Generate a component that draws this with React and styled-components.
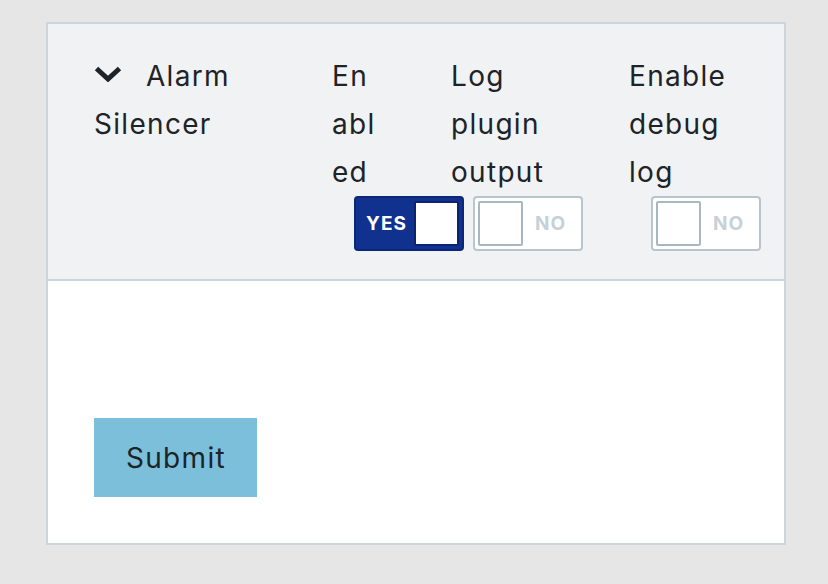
import React from 'react';
import styled, { createGlobalStyle } from 'styled-components';

const GlobalStyle = createGlobalStyle`
  body {
    margin: 0;
    background: #e6e6e6;
    font-family: Inter, "Noto Sans", sans-serif;
    color: #1d2327;
  }
`;

const Page = styled.div`
  padding: 22px 42px 0 46px;
`;

const Card = styled.form`
  border: 2px solid #c9d6df;
  background: #fff;
`;

const Header = styled.div`
  display: grid;
  grid-template-columns: 238px 119px 178px 1fr;
  align-items: start;
  padding: 28px 24px 28px 46px;
  background: #f0f2f4;
  border-bottom: 2px solid #c9d6df;
  font-size: 28px;
  line-height: 48px;
  letter-spacing: 1.3px;
`;

const Title = styled.div`
  width: 200px;
`;

const Chevron = styled.svg`
  width: 28px;
  height: 16px;
  margin-right: 24px;
  vertical-align: 4px;
`;

const Column = styled.div`
  display: flex;
  flex-direction: column;
  align-items: flex-start;
`;

const Label = styled.div`
  width: ${(p) => p.$w}px;
  word-break: ${(p) => (p.$breakAll ? 'break-all' : 'normal')};
`;

const Switch = styled.button`
  box-sizing: border-box;
  display: flex;
  flex-direction: ${(p) => (p.$on ? 'row' : 'row-reverse')};
  align-items: center;
  width: 110px;
  height: 55px;
  margin-left: 22px;
  padding: 3px;
  border-radius: 4px;
  border: 2px solid ${(p) => (p.$on ? '#0b277a' : '#b9c5cd')};
  background: ${(p) => (p.$on ? '#11318f' : '#fff')};
  cursor: pointer;
  font-family: inherit;
`;

const SwitchText = styled.span`
  flex: 1;
  text-align: center;
  font-size: 19px;
  font-weight: 700;
  letter-spacing: 1px;
  color: ${(p) => (p.$on ? '#fff' : '#c6d0d7')};
`;

const Knob = styled.span`
  box-sizing: border-box;
  width: 45px;
  height: 45px;
  background: #fff;
  border-radius: 2px;
  border: 2px solid ${(p) => (p.$on ? '#0b2370' : '#a9b7c0')};
`;

const Body = styled.div`
  padding: 137px 46px 46px;
`;

const SubmitButton = styled.button`
  height: 79px;
  padding: 0 31px 0 32px;
  border: none;
  background: #7bbfdb;
  color: #1d2327;
  font-family: inherit;
  font-size: 28px;
  letter-spacing: 1.3px;
  cursor: pointer;
`;

const Toggle = ({ on }) => (
  <Switch type="button" $on={on}>
    <SwitchText $on={on}>{on ? 'YES' : 'NO'}</SwitchText>
    <Knob $on={on} />
  </Switch>
);

export default function App() {
  return (
    <Page>
      <GlobalStyle />
      <Card onSubmit={(e) => e.preventDefault()}>
        <Header>
          <Title>
            <Chevron viewBox="0 0 28 16">
              <polyline points="2.5,2.5 14,13 25.5,2.5" fill="none" stroke="#1d2327" strokeWidth="5" />
            </Chevron>
            Alarm Silencer
          </Title>
          <Column>
            <Label $w={51} $breakAll>Enabled</Label>
            <Toggle on />
          </Column>
          <Column>
            <Label $w={125}>Log plugin output</Label>
            <Toggle on={false} />
          </Column>
          <Column>
            <Label $w={120}>Enable debug log</Label>
            <Toggle on={false} />
          </Column>
        </Header>
        <Body>
          <SubmitButton type="submit">Submit</SubmitButton>
        </Body>
      </Card>
    </Page>
  );
}
